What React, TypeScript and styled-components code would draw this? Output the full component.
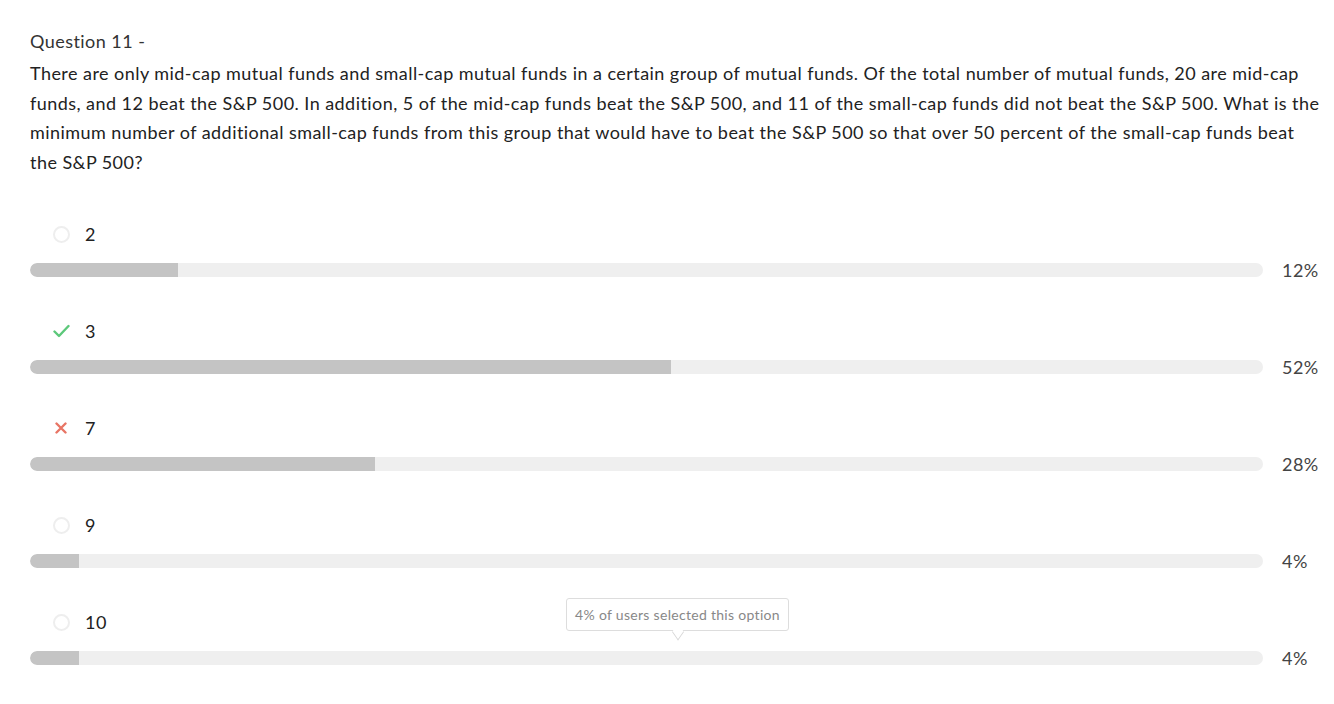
import React from "react";
import styled, { createGlobalStyle } from "styled-components";

const Global = createGlobalStyle`
  html, body { margin: 0; padding: 0; background: #fff; }
  body { font-family: Lato, "Open Sans", sans-serif; color: #333; letter-spacing: 0.45px; }
`;

const Page = styled.div`
  padding: 28px 0 0 30px;
`;

const Title = styled.div`
  font-size: 18px;
  line-height: 26px;
  color: #333;
  margin-bottom: 5px;
`;

const Stem = styled.p`
  margin: 0;
  font-size: 18px;
  line-height: 29.5px;
  color: #222;
  width: 1293px;
`;

const Options = styled.div`
  margin-top: 45px;
  display: flex;
  flex-direction: column;
  gap: 41px;
`;

const Option = styled.div`
  position: relative;
  display: flex;
  flex-direction: column;
  gap: 16px;
`;

const LabelRow = styled.div`
  display: flex;
  align-items: center;
  height: 24px;
  padding-left: 22px;
`;

const Marker = styled.span`
  width: 18px;
  height: 18px;
  display: flex;
  align-items: center;
  justify-content: center;
  margin-right: 15px;
`;

const Radio = styled.span`
  width: 13px;
  height: 13px;
  border: 2px solid #eeeeee;
  border-radius: 50%;
`;

const Label = styled.span`
  font-size: 18px;
  color: #222;
`;

const BarRow = styled.div`
  display: flex;
  align-items: center;
  height: 16px;
`;

const Track = styled.div`
  width: 1233px;
  height: 14px;
  background: #efefef;
  border-radius: 7px;
  overflow: hidden;
`;

const Fill = styled.div`
  height: 100%;
  background: #c4c4c4;
  border-radius: 7px 0 0 7px;
`;

const Pct = styled.span`
  margin-left: 19px;
  font-size: 18px;
  color: #444;
`;

const Tooltip = styled.div`
  position: absolute;
  left: 536px;
  top: -12px;
  width: 223px;
  height: 33px;
  box-sizing: border-box;
  border: 1px solid #dddddd;
  border-radius: 3px;
  background: #fff;
  font-size: 14px;
  letter-spacing: 0.3px;
  color: #888;
  display: flex;
  align-items: center;
  justify-content: center;
  white-space: nowrap;

  &::after {
    content: "";
    position: absolute;
    left: 105px;
    bottom: -8px;
    width: 11px;
    height: 11px;
    background: #fff;
    border-right: 1px solid #d6d6d6;
    border-bottom: 1px solid #d6d6d6;
    transform: scaleX(0.7) rotate(45deg);
  }
`;

type Status = "none" | "correct" | "wrong";

const data: { label: string; pct: number; status: Status; tip?: boolean }[] = [
  { label: "2", pct: 12, status: "none" },
  { label: "3", pct: 52, status: "correct" },
  { label: "7", pct: 28, status: "wrong" },
  { label: "9", pct: 4, status: "none" },
  { label: "10", pct: 4, status: "none", tip: true },
];

function MarkerIcon({ status }: { status: Status }) {
  if (status === "correct")
    return (
      <svg width="17" height="14" viewBox="0 0 17 14">
        <path d="M1.5 7.5 L6 12 L15.5 2" fill="none" stroke="#5cc87a" strokeWidth="2.4" strokeLinecap="round" strokeLinejoin="round" />
      </svg>
    );
  if (status === "wrong")
    return (
      <svg width="12" height="12" viewBox="0 0 12 12">
        <path d="M1.5 1.5 L10.5 10.5 M10.5 1.5 L1.5 10.5" fill="none" stroke="#e87565" strokeWidth="2.4" strokeLinecap="round" />
      </svg>
    );
  return <Radio />;
}

export default function App() {
  return (
    <Page>
      <Global />
      <Title>Question 11 -</Title>
      <Stem>
        There are only mid-cap mutual funds and small-cap mutual funds in a certain group of mutual funds. Of the total number of mutual funds, 20 are mid-cap funds, and 12 beat the S&amp;P 500. In addition, 5 of the mid-cap funds beat the S&amp;P 500, and 11 of the small-cap funds did not beat the S&amp;P 500. What is the minimum number of additional small-cap funds from this group that would have to beat the S&amp;P 500 so that over 50 percent of the small-cap funds beat the S&amp;P 500?
      </Stem>
      <Options>
        {data.map((o) => (
          <Option key={o.label}>
            <LabelRow>
              <Marker>
                <MarkerIcon status={o.status} />
              </Marker>
              <Label>{o.label}</Label>
            </LabelRow>
            <BarRow>
              <Track>
                <Fill style={{ width: `${o.pct}%` }} />
              </Track>
              <Pct>{o.pct}%</Pct>
            </BarRow>
            {o.tip && <Tooltip>4% of users selected this option</Tooltip>}
          </Option>
        ))}
      </Options>
    </Page>
  );
}
